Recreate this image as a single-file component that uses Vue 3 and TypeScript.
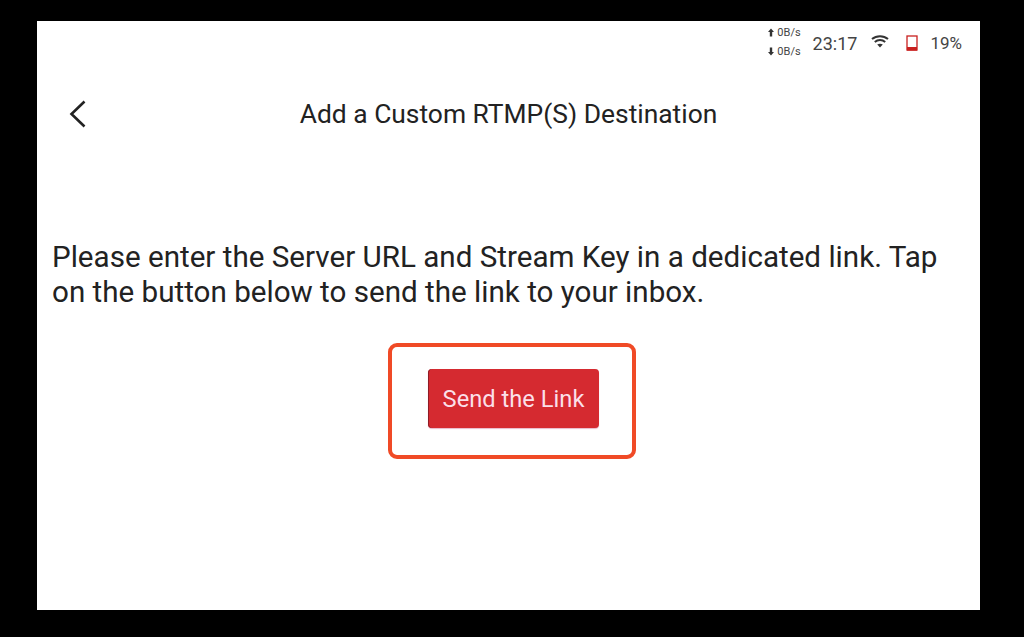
<template>
  <div class="screen">
    <div class="status-bar">
      <div class="speed">
        <span><svg class="arrow" viewBox="0 0 6 8"><path d="M3 0 L6 3.6 H4.2 V8 H1.8 V3.6 H0 Z" /></svg>0B/s</span>
        <span><svg class="arrow" viewBox="0 0 6 8"><path d="M3 8 L6 4.4 H4.2 V0 H1.8 V4.4 H0 Z" /></svg>0B/s</span>
      </div>
      <span class="time">23:17</span>
      <svg class="wifi" viewBox="0 0 18 13" fill="none" stroke="#333" stroke-width="2">
        <path d="M1 4 C5.5 0.2 12.5 0.2 17 4" />
        <path d="M3.8 7 C6.8 4.4 11.2 4.4 14.2 7" />
        <path d="M9 12.5 L6.2 9.6 C7.8 8.3 10.2 8.3 11.8 9.6 Z" fill="#333" stroke="none" />
      </svg>
      <svg class="battery" viewBox="0 0 12 16">
        <rect x="1" y="1" width="10" height="14" fill="none" stroke="#c9201f" stroke-width="1.3" />
        <rect x="1" y="12" width="10" height="3.6" fill="#c9201f" />
      </svg>
      <span class="percent">19%</span>
    </div>

    <div class="header">
      <button class="back" type="button" aria-label="Back">
        <svg viewBox="0 0 18 28" fill="none" stroke="#222" stroke-width="2.6">
          <path d="M15.5 1.5 L2.5 14 L15.5 26.5" />
        </svg>
      </button>
      <h1>Add a Custom RTMP(S) Destination</h1>
    </div>

    <p class="message">
      Please enter the Server URL and Stream Key in a dedicated link. Tap on the button below to send the link to your inbox.
    </p>

    <div class="highlight">
      <button class="send" type="button">Send the Link</button>
    </div>
  </div>
</template>

<script setup lang="ts">
</script>

<style>
html,
body {
  background: #000;
}
</style>

<style scoped>
.screen {
  width: 943px;
  height: 589px;
  margin: 21px 0 0 37px;
  background: #fff;
  font-family: Roboto, "Liberation Sans", sans-serif;
  color: #222;
  display: flex;
  flex-direction: column;
  overflow: hidden;
}

.status-bar {
  height: 44px;
  padding-right: 18px;
  display: flex;
  align-items: center;
  justify-content: flex-end;
  color: #444;
}

.speed {
  display: flex;
  flex-direction: column;
  gap: 7px;
  margin-top: -2px;
  font-size: 11px;
  line-height: 12px;
  margin-right: 12px;
}

.speed span {
  display: flex;
  align-items: center;
  gap: 3px;
}

.arrow {
  width: 6px;
  height: 9px;
  fill: #333;
}

.time {
  font-size: 18px;
  margin-right: 14px;
}

.wifi {
  width: 18px;
  height: 13px;
  margin-right: 17px;
  margin-top: -3px;
}

.battery {
  width: 12px;
  height: 16px;
  margin-right: 12px;
}

.percent {
  font-size: 17px;
}

.header {
  height: 52px;
  margin-top: 23px;
  position: relative;
  display: flex;
  align-items: center;
  justify-content: center;
}

.header h1 {
  margin: 0;
  font-size: 26.4px;
  font-weight: 400;
  line-height: 32px;
}

.back {
  position: absolute;
  left: 32px;
  top: 12px;
  width: 18px;
  height: 28px;
  padding: 0;
  border: 0;
  background: none;
}

.back svg {
  display: block;
  width: 18px;
  height: 28px;
}

.message {
  margin: 100px 0 0;
  padding: 0 15px;
  font-size: 29.6px;
  line-height: 35px;
  color: #222;
}

.highlight {
  align-self: center;
  box-sizing: border-box;
  width: 248px;
  height: 116px;
  margin-top: 33px;
  margin-left: 6px;
  padding: 0 0 6px 4px;
  border: 4px solid #f04a26;
  border-radius: 9px;
  display: flex;
  align-items: center;
  justify-content: center;
}

.send {
  width: 171px;
  height: 59px;
  padding: 2px 0 0;
  border: 0;
  border-radius: 4px;
  background: #d52a30;
  box-shadow: inset 1px 0 0 #8f1b25, 0 1px 1px #e9b7c9;
  color: #fbdfe8;
  font-family: inherit;
  font-size: 23.7px;
}
</style>
